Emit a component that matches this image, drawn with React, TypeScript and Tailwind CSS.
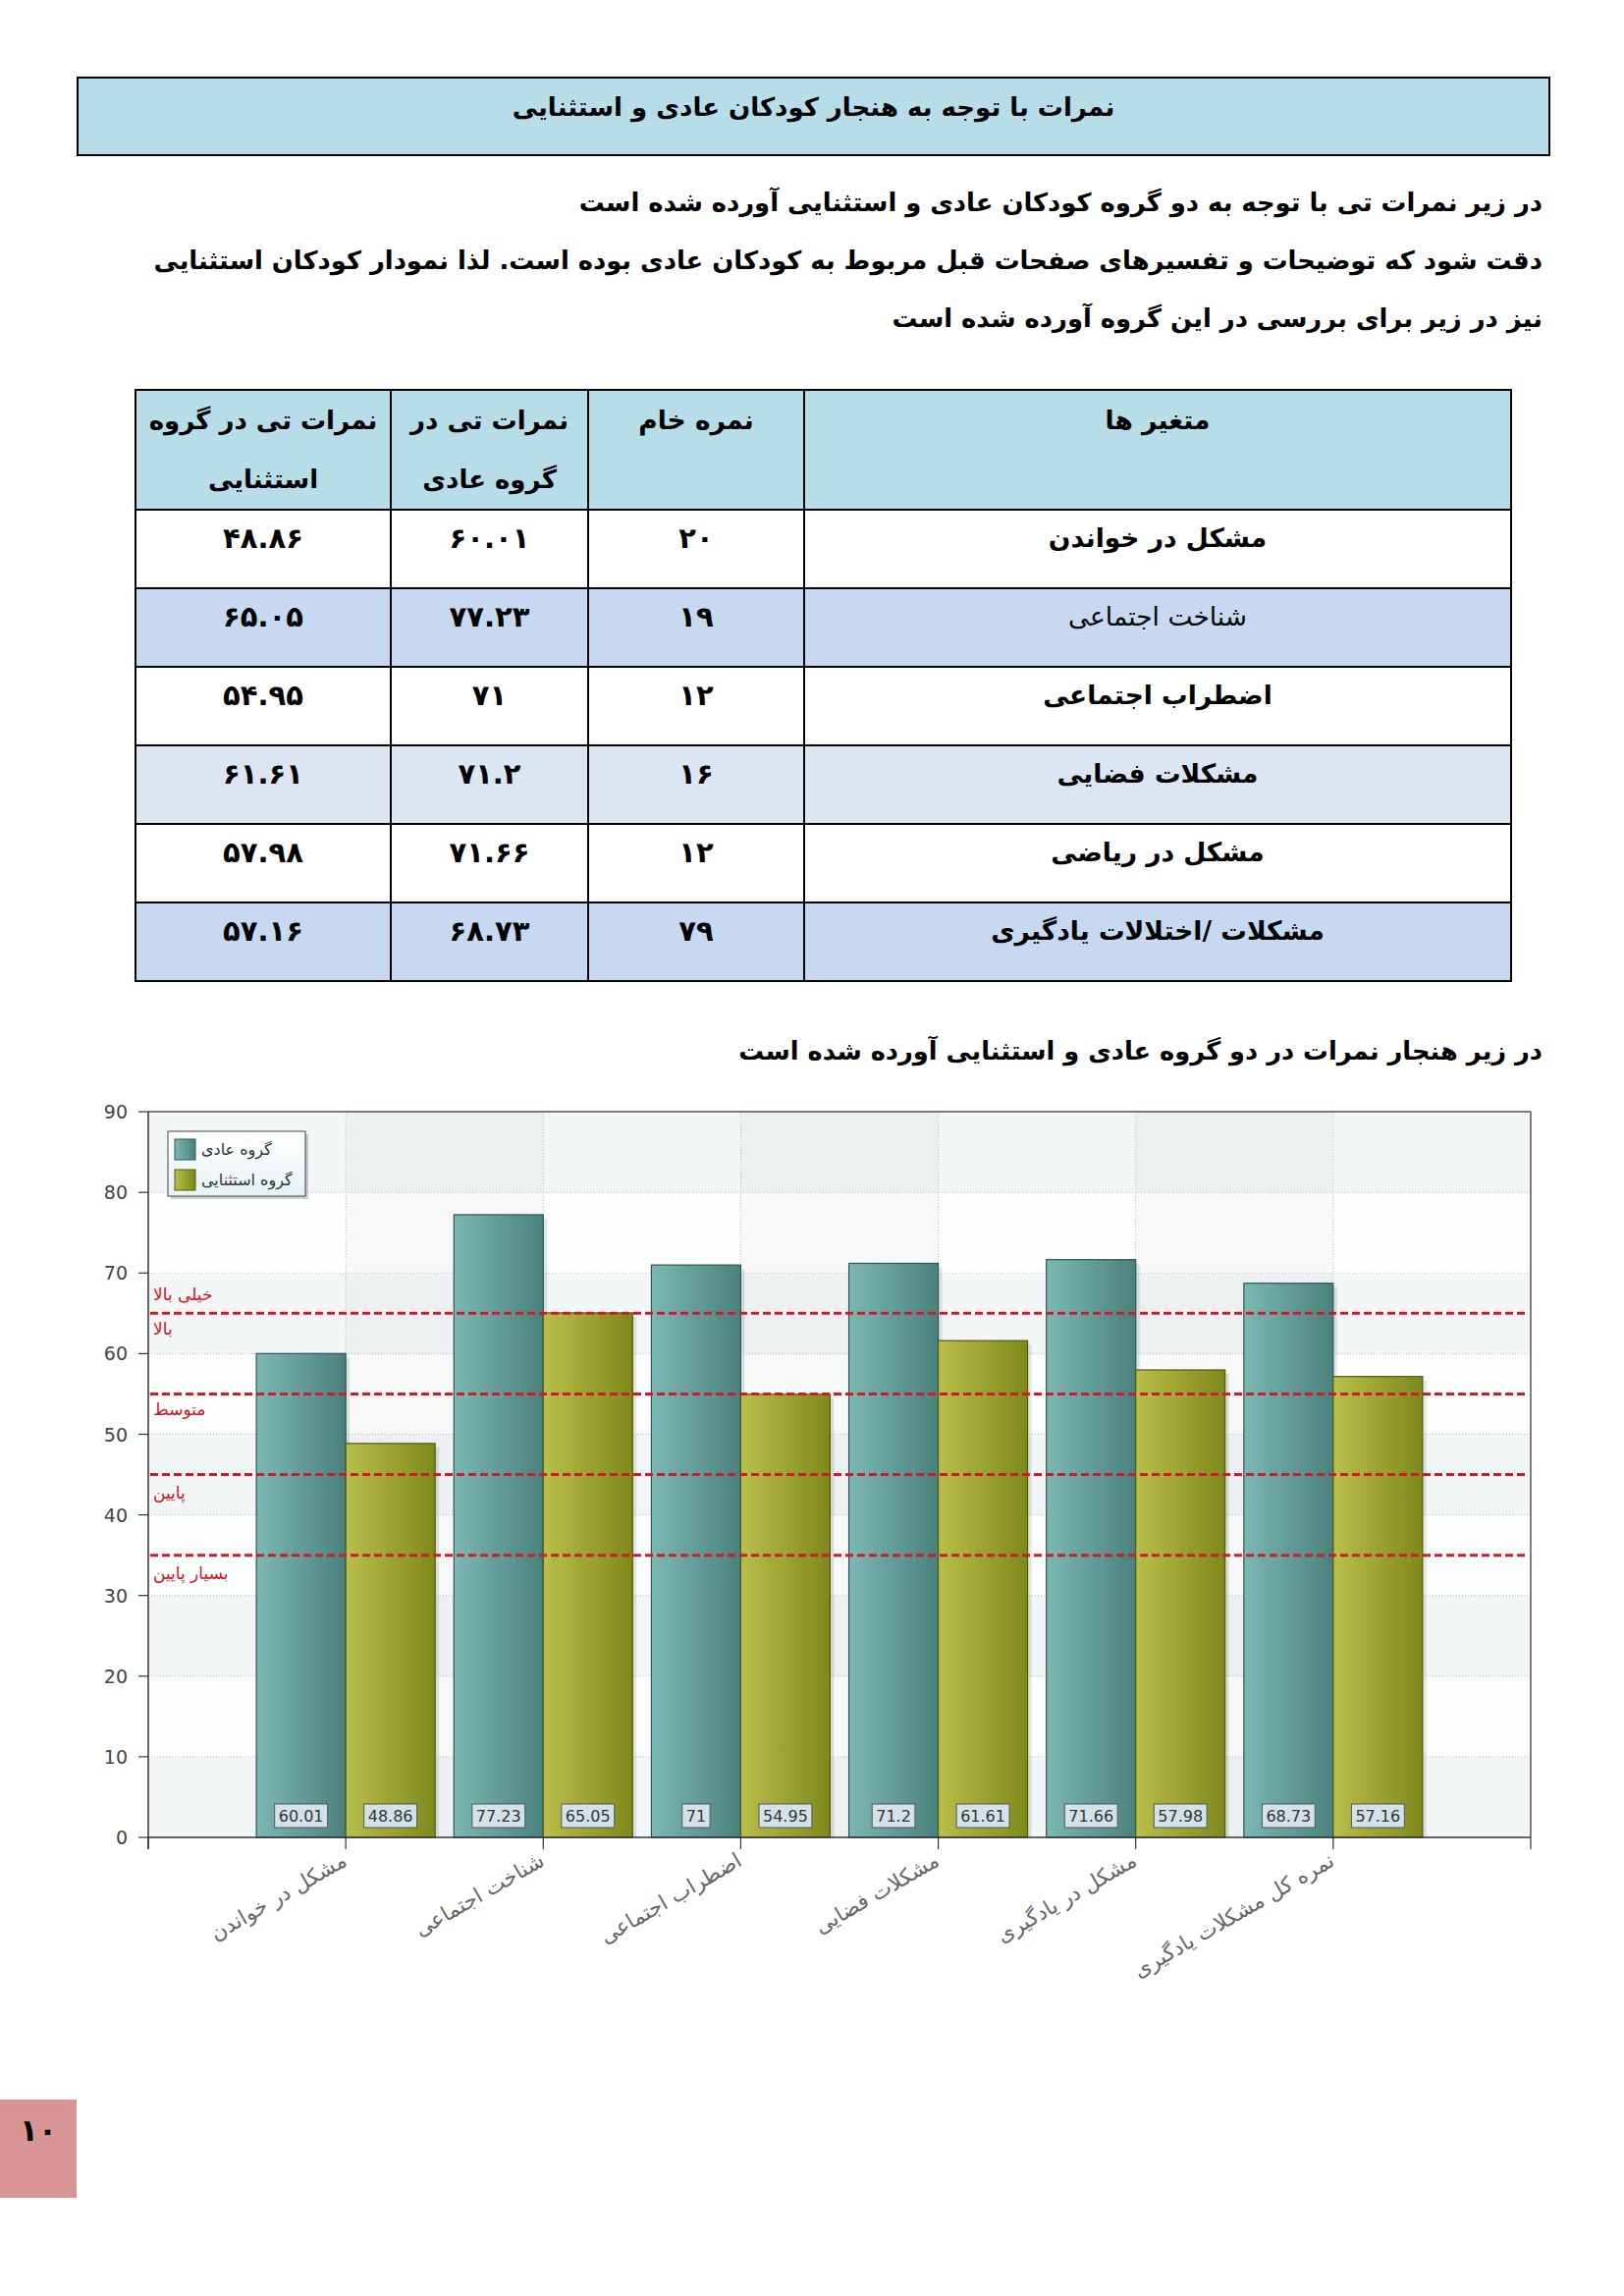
import React from 'react';

const cats = [
  { name: 'مشکل در خواندن', a: 60.01, b: 48.86 },
  { name: 'شناخت اجتماعی', a: 77.23, b: 65.05 },
  { name: 'اضطراب اجتماعی', a: 71, b: 54.95 },
  { name: 'مشکلات فضایی', a: 71.2, b: 61.61 },
  { name: 'مشکل در یادگیری', a: 71.66, b: 57.98 },
  { name: 'نمره کل مشکلات یادگیری', a: 68.73, b: 57.16 },
];

const rows = [
  { v: 'مشکل در خواندن', raw: '۲۰', n: '۶۰.۰۱', e: '۴۸.۸۶', bg: 'bg-white', bold: true },
  { v: 'شناخت اجتماعی', raw: '۱۹', n: '۷۷.۲۳', e: '۶۵.۰۵', bg: 'bg-[#c6d9f1]', bold: false },
  { v: 'اضطراب اجتماعی', raw: '۱۲', n: '۷۱', e: '۵۴.۹۵', bg: 'bg-white', bold: true },
  { v: 'مشکلات فضایی', raw: '۱۶', n: '۷۱.۲', e: '۶۱.۶۱', bg: 'bg-[#dce6f2]', bold: true },
  { v: 'مشکل در ریاضی', raw: '۱۲', n: '۷۱.۶۶', e: '۵۷.۹۸', bg: 'bg-white', bold: true },
  { v: 'مشکلات /اختلالات یادگیری', raw: '۷۹', n: '۶۸.۷۳', e: '۵۷.۱۶', bg: 'bg-[#c6d9f1]', bold: true },
];

// chart geometry, in page pixels
const X0 = 151;
const SLOT = 201.14;
const X1 = X0 + SLOT * 7;
const Y0 = 1871;
const U = 8.21;
const BAR = 91;
const yv = (v: number) => Y0 - v * U;
const fontFam = "'DejaVu Sans', sans-serif";

const levels = [
  { label: 'خیلی بالا', y: 1318 },
  { label: 'بالا', y: 1353 },
  { label: 'متوسط', y: 1435 },
  { label: 'پایین', y: 1520 },
  { label: 'بسیار پایین', y: 1602 },
];

function ValueTag({ cx, value }: { cx: number; value: number }) {
  const s = String(value);
  const digits = s.replace('.', '').length;
  const w = digits * 10.2 + (s.includes('.') ? 5.1 : 0) + 8;
  return (
    <g>
      <rect x={cx - w / 2} y={1837} width={w} height={24} fill="#d4e1e7" stroke="#4d5b5b" strokeWidth={1} />
      <text x={cx} y={1855} textAnchor="middle" fontSize={16} fill="#333" fontFamily={fontFam}>
        {s}
      </text>
    </g>
  );
}

function Chart() {
  const bands = Array.from({ length: 9 }, (_, i) => i);
  const slots = Array.from({ length: 7 }, (_, i) => i);
  return (
    <svg width={1654} height={945} viewBox="0 1095 1654 945" className="block">
      <defs>
        <linearGradient id="teal" x1="0" y1="0" x2="1" y2="0">
          <stop offset="0" stopColor="#7cb8b3" />
          <stop offset="1" stopColor="#4a817d" />
        </linearGradient>
        <linearGradient id="olive" x1="0" y1="0" x2="1" y2="0">
          <stop offset="0" stopColor="#b9bf4a" />
          <stop offset="1" stopColor="#7f881b" />
        </linearGradient>
        <linearGradient id="legendBg" x1="0" y1="0" x2="0" y2="1">
          <stop offset="0" stopColor="#ffffff" />
          <stop offset="1" stopColor="#e6f2f5" />
        </linearGradient>
      </defs>

      {/* background bands */}
      {bands.map((i) => (
        <rect
          key={'b' + i}
          x={X0}
          y={yv((i + 1) * 10)}
          width={X1 - X0}
          height={U * 10}
          fill={i % 2 === 0 ? '#f3f6f7' : '#fdfefe'}
        />
      ))}
      {slots
        .filter((i) => i % 2 === 1)
        .map((i) => (
          <rect key={'s' + i} x={X0 + i * SLOT} y={yv(90)} width={SLOT} height={U * 90} fill="rgba(0,0,0,0.025)" />
        ))}

      {/* dotted grid */}
      {bands.map((i) => (
        <line
          key={'g' + i}
          x1={X0}
          x2={X1}
          y1={yv((i + 1) * 10)}
          y2={yv((i + 1) * 10)}
          stroke="#b5b9bb"
          strokeWidth={1}
          strokeDasharray="1 2"
        />
      ))}
      {cats.map((_, i) => (
        <line
          key={'vg' + i}
          x1={X0 + (i + 1) * SLOT}
          x2={X0 + (i + 1) * SLOT}
          y1={yv(90)}
          y2={Y0}
          stroke="#b5b9bb"
          strokeWidth={1}
          strokeDasharray="1 2"
        />
      ))}

      {/* plot frame */}
      <line x1={X0} x2={X1} y1={yv(90)} y2={yv(90)} stroke="#555" strokeWidth={1.5} />
      <line x1={X1} x2={X1} y1={yv(90)} y2={Y0} stroke="#555" strokeWidth={1.5} />

      {/* bars */}
      {cats.map((c, i) => {
        const cx = X0 + (i + 1) * SLOT;
        return (
          <g key={'bar' + i}>
            <rect x={cx - BAR + 4} y={yv(c.a) + 4} width={BAR} height={Y0 - yv(c.a) - 4} fill="rgba(0,0,0,0.10)" />
            <rect x={cx + 4} y={yv(c.b) + 4} width={BAR} height={Y0 - yv(c.b) - 4} fill="rgba(0,0,0,0.10)" />
            <rect x={cx - BAR} y={yv(c.a)} width={BAR} height={Y0 - yv(c.a)} fill="url(#teal)" stroke="#2d5755" strokeWidth={1.2} />
            <rect x={cx} y={yv(c.b)} width={BAR} height={Y0 - yv(c.b)} fill="url(#olive)" stroke="#525810" strokeWidth={1.2} />
          </g>
        );
      })}

      {/* reference levels */}
      {[65, 55, 45, 35].map((v) => (
        <line key={'r' + v} x1={X0 + 2} x2={X1 - 4} y1={yv(v)} y2={yv(v)} stroke="#cc1c2c" strokeWidth={3} strokeDasharray="8 4" />
      ))}
      {levels.map((l) => (
        <text key={l.label} x={156} y={l.y} dominantBaseline="central" fontSize={17} fill="#d4111c" fontFamily={fontFam}>
          {l.label}
        </text>
      ))}

      {/* value tags */}
      {cats.map((c, i) => {
        const cx = X0 + (i + 1) * SLOT;
        return (
          <g key={'tag' + i}>
            <ValueTag cx={cx - BAR / 2} value={c.a} />
            <ValueTag cx={cx + BAR / 2} value={c.b} />
          </g>
        );
      })}

      {/* axes */}
      <line x1={X0} x2={X0} y1={yv(90)} y2={Y0 + 12} stroke="#333" strokeWidth={1.5} />
      <line x1={X0} x2={X1} y1={Y0} y2={Y0} stroke="#333" strokeWidth={1.5} />
      {Array.from({ length: 10 }, (_, i) => i * 10).map((v) => (
        <g key={'y' + v}>
          <line x1={X0 - 10} x2={X0} y1={yv(v)} y2={yv(v)} stroke="#333" strokeWidth={1.2} />
          <text x={130} y={yv(v)} dominantBaseline="central" textAnchor="end" fontSize={19} fill="#444" fontFamily={fontFam}>
            {v}
          </text>
        </g>
      ))}
      {Array.from({ length: 8 }, (_, i) => i).map((i) => (
        <line key={'xt' + i} x1={X0 + i * SLOT} x2={X0 + i * SLOT} y1={Y0} y2={Y0 + 12} stroke="#333" strokeWidth={1.2} />
      ))}
      {cats.map((c, i) => {
        const tx = X0 + (i + 1) * SLOT - 6;
        return (
          <text
            key={'xl' + i}
            transform={`translate(${tx} 1884) rotate(-30)`}
            y={17}
            textAnchor="end"
            fontSize={21.5}
            fill="#666"
            fontFamily={fontFam}
          >
            {c.name}
          </text>
        );
      })}

      {/* legend */}
      <rect x={174} y={1155} width={140} height={66} fill="rgba(0,0,0,0.18)" />
      <rect x={171} y={1152} width={140} height={66} fill="url(#legendBg)" stroke="#3a4646" strokeWidth={1} />
      <rect x={178} y={1160} width={21} height={21} fill="url(#teal)" stroke="#2d5755" strokeWidth={1} />
      <rect x={178} y={1191} width={21} height={21} fill="url(#olive)" stroke="#525810" strokeWidth={1} />
      <text x={205} y={1170} dominantBaseline="central" fontSize={16} fill="#333" fontFamily={fontFam}>
        گروه عادی
      </text>
      <text x={205} y={1201} dominantBaseline="central" fontSize={16} fill="#333" fontFamily={fontFam}>
        گروه استثنایی
      </text>
    </svg>
  );
}

export default function App() {
  return (
    <div className="relative w-[1654px] h-[2338px] overflow-hidden bg-white pt-[78px] font-['DejaVu_Sans',sans-serif] text-black">
      <div className="ml-[78px] flex h-[81px] w-[1501px] items-center justify-center border-2 border-black bg-[#b7dde8] pb-[18px]">
        <h1 dir="rtl" className="text-[26px] font-bold">
          نمرات با توجه به هنجار کودکان عادی و استثنایی
        </h1>
      </div>

      <div dir="rtl" className="mt-[18px] pr-[83px] text-[25.8px] font-bold leading-[59px]">
        <p className="whitespace-nowrap">در زیر نمرات تی با توجه به دو گروه کودکان عادی و استثنایی آورده شده است</p>
        <p className="whitespace-nowrap">
          دقت شود که توضیحات و تفسیرهای صفحات قبل مربوط به کودکان عادی بوده است. لذا نمودار کودکان استثنایی
        </p>
        <p className="whitespace-nowrap">نیز در زیر برای بررسی در این گروه آورده شده است</p>
      </div>

      <table dir="rtl" className="mt-[42px] ml-[137px] w-[1401px] table-fixed border-collapse text-[26.5px] font-bold">
        <colgroup>
          <col className="w-[720px]" />
          <col className="w-[220px]" />
          <col className="w-[201px]" />
          <col className="w-[260px]" />
        </colgroup>
        <thead>
          <tr className="h-[119px] bg-[#b7dde8]">
            <th className="border-2 border-black align-top leading-[60px]">متغیر ها</th>
            <th className="border-2 border-black align-top leading-[60px]">نمره خام</th>
            <th className="border-2 border-black align-top text-[26px] leading-[60px]">
              نمرات تی در
              <br />
              گروه عادی
            </th>
            <th className="border-2 border-black align-top text-[26px] leading-[60px]">
              نمرات تی در گروه
              <br />
              استثنایی
            </th>
          </tr>
        </thead>
        <tbody>
          {rows.map((r) => (
            <tr key={r.v} className={`h-[80px] ${r.bg}`}>
              <td className={`border-2 border-black pt-[8px] text-center align-top leading-[40px] ${r.bold ? '' : 'font-normal'}`}>
                {r.v}
              </td>
              <td className="border-2 border-black pt-[8px] text-center align-top text-[29px] leading-[40px]">{r.raw}</td>
              <td className="border-2 border-black pt-[8px] text-center align-top text-[29px] leading-[40px]">{r.n}</td>
              <td className="border-2 border-black pt-[8px] text-center align-top text-[29px] leading-[40px]">{r.e}</td>
            </tr>
          ))}
        </tbody>
      </table>

      <p dir="rtl" className="mt-[45px] pr-[83px] text-[25.7px] font-bold leading-[50px] whitespace-nowrap">
        در زیر هنجار نمرات در دو گروه عادی و استثنایی آورده شده است
      </p>

      <Chart />

      <div className="mt-[98px] flex h-[100px] w-[78px] justify-center bg-[#d99594] pt-[16px] text-[31px] font-bold leading-none">
        ۱۰
      </div>
    </div>
  );
}
